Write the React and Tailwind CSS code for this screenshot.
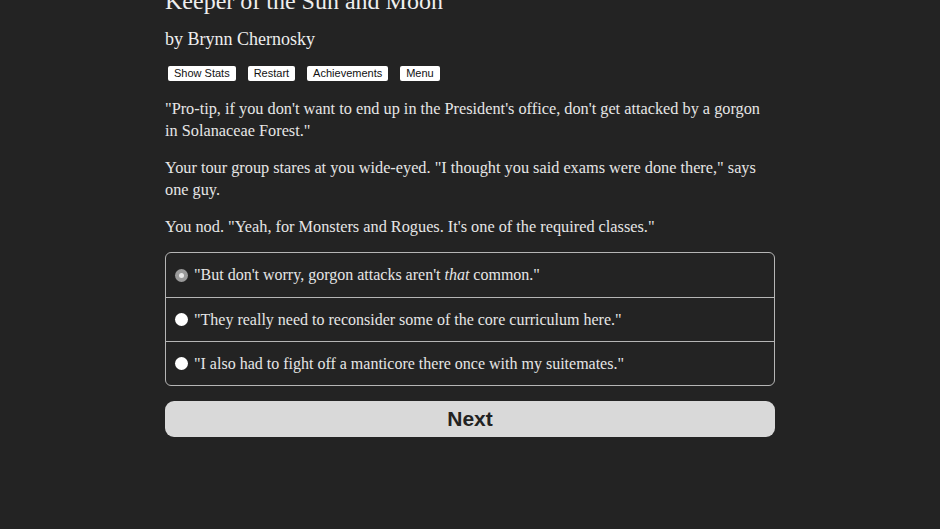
import React, { useState } from "react";

const choices = [
  { id: 0, text: <>"But don't worry, gorgon attacks aren't <i>that</i> common."</> },
  { id: 1, text: <>"They really need to reconsider some of the core curriculum here."</> },
  { id: 2, text: <>"I also had to fight off a manticore there once with my suitemates."</> },
];

export default function App() {
  const [selected, setSelected] = useState(0);

  return (
    <div className="min-h-screen bg-[#232323] text-[#e6e6e6] overflow-hidden h-[529px]">
      <div className="w-[610px] mx-auto font-['Liberation_Serif',serif]">
        {/* header */}
        <h1 className="text-[24px] leading-[28px] -mt-[13px] text-[#eeeeee]">
          Keeper of the Sun and Moon
        </h1>
        <h2 className="text-[18px] leading-[24px] mt-[12px] text-[#eeeeee]">
          by Brynn Chernosky
        </h2>

        <div className="flex gap-3 mt-[15px] ml-[3px] font-['Liberation_Sans',sans-serif]">
          {["Show Stats", "Restart", "Achievements", "Menu"].map((b) => (
            <button
              key={b}
              className="bg-white text-[#111] text-[11px] leading-[15px] h-[15px] px-[6px] rounded-[2px]"
            >
              {b}
            </button>
          ))}
        </div>

        {/* story */}
        <div className="text-[16.3px] leading-[22px] mt-[17px] space-y-[15px]">
          <p>
            "Pro-tip, if you don't want to end up in the President's office, don't get attacked by a gorgon
            <br />
            in Solanaceae Forest."
          </p>
          <p>
            Your tour group stares at you wide-eyed. "I thought you said exams were done there," says
            <br />
            one guy.
          </p>
          <p>You nod. "Yeah, for Monsters and Rogues. It's one of the required classes."</p>
        </div>

        {/* choices */}
        <div className="mt-[14px] border border-[#b5b5b5] rounded-[6px] overflow-hidden">
          {choices.map((c, i) => (
            <label
              key={c.id}
              onClick={() => setSelected(c.id)}
              className={`flex items-center h-[44px] pl-[9px] gap-[6px] text-[16px] cursor-pointer ${
                i > 0 ? "border-t border-[#b5b5b5]" : ""
              }`}
            >
              <span
                className={`w-[13px] h-[13px] rounded-full flex items-center justify-center ${
                  selected === c.id ? "bg-[#9a9a9a]" : "bg-white"
                }`}
              >
                {selected === c.id && <span className="w-[5px] h-[5px] rounded-full bg-[#e8e8e8]" />}
              </span>
              <span>{c.text}</span>
            </label>
          ))}
        </div>

        <button className="mt-[15px] w-full h-[36px] rounded-[9px] bg-[#d9d9d9] text-[#222] font-bold text-[21px] font-['Liberation_Sans',sans-serif]">
          Next
        </button>
      </div>
    </div>
  );
}
